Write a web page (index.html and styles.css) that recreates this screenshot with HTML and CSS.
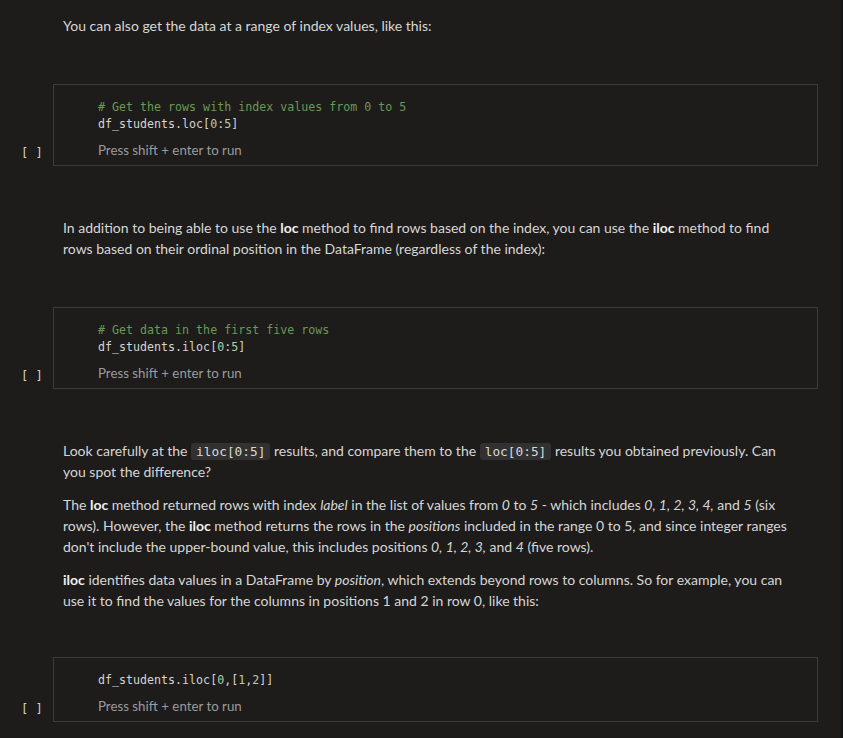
FILE: index.html
```html
<!DOCTYPE html>
<html lang="en">
<head>
<meta charset="utf-8">
<title>Notebook</title>
<link rel="stylesheet" href="styles.css">
</head>
<body>
<div class="notebook">
  <div class="md md-first">
    <p>You can also get the data at a range of index values, like this:</p>
  </div>

  <div class="cell">
    <div class="gutter">[ ]</div>
    <div class="box">
      <div class="code"><span class="cm"># Get the rows with index values from 0 to 5</span>
df_students.loc[<span class="num">0</span>:<span class="num">5</span>]</div>
      <div class="hint">Press shift + enter to run</div>
    </div>
  </div>

  <div class="md">
    <p>In addition to being able to use the <b>loc</b> method to find rows based on the index, you can use the <b>iloc</b> method to find rows based on their ordinal position in the DataFrame (regardless of the index):</p>
  </div>

  <div class="cell">
    <div class="gutter">[ ]</div>
    <div class="box">
      <div class="code"><span class="cm"># Get data in the first five rows</span>
df_students.iloc[<span class="num">0</span>:<span class="num">5</span>]</div>
      <div class="hint">Press shift + enter to run</div>
    </div>
  </div>

  <div class="md md-long">
    <p>Look carefully at the <code>iloc[0:5]</code> results, and compare them to the <code>loc[0:5]</code> results you obtained previously. Can you spot the difference?</p>
    <p>The <b>loc</b> method returned rows with index <i>label</i> in the list of values from <i>0</i> to <i>5</i> - which includes <i>0, 1, 2, 3, 4,</i> and <i>5</i> (six rows). However, the <b>iloc</b> method returns the rows in the <i>positions</i> included in the range 0 to 5, and since integer ranges don't include the upper-bound value, this includes positions <i>0, 1, 2, 3,</i> and <i>4</i> (five rows).</p>
    <p><b>iloc</b> identifies data values in a DataFrame by <i>position</i>, which extends beyond rows to columns. So for example, you can use it to find the values for the columns in positions 1 and 2 in row 0, like this:</p>
  </div>

  <div class="cell">
    <div class="gutter">[ ]</div>
    <div class="box">
      <div class="code">df_students.iloc[<span class="num">0</span>,[<span class="num">1</span>,<span class="num">2</span>]]</div>
      <div class="hint">Press shift + enter to run</div>
    </div>
  </div>
</div>
</body>
</html>
```

FILE: styles.css
```css
html, body {
  margin: 0;
  padding: 0;
  background: #1d1c1b;
  height: 100%;
  overflow: hidden;
}

body {
  font-family: "Lato", "Noto Sans", sans-serif;
  font-size: 14px;
  color: #d6d6d6;
}

.notebook {
  display: flex;
  flex-direction: column;
  box-shadow: inset -3px 0 3px -2px rgba(0, 0, 0, 0.5);
  min-height: 100%;
}

.md {
  padding: 0 50px 0 63px;
  margin: 51px 0 48px;
}

.md-first {
  margin-top: 15px;
}

.md-long {
  margin-top: 51px;
  margin-bottom: 46px;
}

.md p {
  margin: 0 0 12px;
  line-height: 21px;
}

.md p:last-child {
  margin-bottom: 0;
}

.md b {
  font-weight: 700;
  color: #f0f0f0;
}

.md code {
  font-family: "DejaVu Sans Mono", monospace;
  font-size: 12.8px;
  line-height: 1;
  background: #313131;
  border-radius: 3px;
  padding: 1px 5px;
  color: #d8d8d8;
}

.cell {
  display: flex;
  align-items: flex-end;
  margin-right: 25px;
}

.gutter {
  width: 53px;
  flex: none;
  box-sizing: border-box;
  padding-left: 21px;
  padding-bottom: 4px;
  font-family: "DejaVu Sans Mono", monospace;
  font-size: 12px;
  line-height: 18px;
  color: #cfcfcf;
  white-space: pre;
}

.box {
  flex: 1;
  border: 1px solid #3d3c3b;
  padding: 14px 0 6px 44px;
}

.code {
  font-family: "DejaVu Sans Mono", monospace;
  font-size: 11.65px;
  line-height: 17px;
  color: #d4d4d4;
  white-space: pre;
}

.cm {
  color: #6a9955;
}

.num {
  color: #b5cea8;
}

.hint {
  margin-top: 8px;
  font-size: 13.3px;
  line-height: 18px;
  color: #9b9b9b;
}
```
